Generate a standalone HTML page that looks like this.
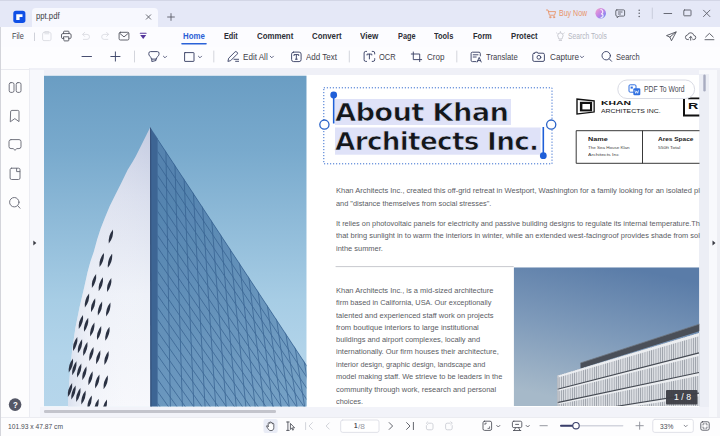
<!DOCTYPE html>
<html><head><meta charset="utf-8"><title>ppt.pdf</title>
<style>
*{box-sizing:border-box;margin:0;padding:0}
html,body{width:720px;height:436px;overflow:hidden;background:#fff}
body{font-family:"Liberation Sans",sans-serif;font-size:9px;color:#333;position:relative}
.abs{position:absolute}
.t{position:absolute;white-space:nowrap;transform-origin:0 50%}
#titlebar{left:0;top:0;width:720px;height:27px;background:#e5e8f7}
#topstrip{left:0;top:0;width:720px;height:1.3px;background:#d3d6e6}
#tab{left:32px;top:7.5px;width:126px;height:19.5px;background:#f7f8fe;border-radius:4px 4px 0 0}
#menurow{left:0;top:27px;width:720px;height:20px;background:#fcfcff}
#toolrow{left:0;top:47px;width:720px;height:20.5px;background:#fdfdff}
#toolborder{left:0;top:67.5px;width:720px;height:8px;background:#eff0f7}
#sidebar{left:0;top:67.5px;width:30px;height:349.5px;background:#fdfdfe;border-right:1px solid #ebecf2}
#sidetop{left:0;top:69px;width:30px;height:1px;background:#e9eaf0}
#leftline{left:0;top:27px;width:1px;height:409px;background:#d4d5db}
#gutterL{left:30px;top:70px;width:14px;height:347px;background:#f7f8fc}
#gutterR{left:699.3px;top:70px;width:20.7px;height:347px;background:#f8f9fc;border-right:3.5px solid #eeeff4}
#gutterR2{left:699.3px;top:74px;width:9.7px;height:343px;background:#eceef5}
#docbg{left:44px;top:75.4px;width:655.3px;height:331.2px;background:#fff}
#hscroll{left:40px;top:406.6px;width:669px;height:10.4px;background:#f2f3f9}
#hthumb{left:44px;top:410.3px;width:231.6px;height:2.5px;background:#c3c4cc;border-radius:1.2px}
#bottombar{left:0;top:416.5px;width:720px;height:19.5px;background:#fdfdfe;border-top:1px solid #ebecf1}
.sep{position:absolute;width:1px;background:#d3d5dc}
</style></head><body>
<div class="abs" id="titlebar"></div>
<div class="abs" id="topstrip"></div>
<div class="abs" id="tab"></div>
<div class="abs" id="menurow"></div>
<div class="abs" id="toolrow"></div>
<div class="abs" id="toolborder"></div>
<div class="abs" id="sidebar"></div>
<div class="abs" id="sidetop"></div>
<div class="abs" id="gutterL"></div>
<div class="abs" id="gutterR"></div>
<div class="abs" id="gutterR2"></div>
<div class="abs" id="docbg"></div>
<div class="abs" id="hscroll"></div>
<div class="abs" id="hthumb"></div>
<div class="abs" id="bottombar"></div>
<div class="abs" id="leftline"></div>
<svg class="abs" style="left:0;top:0" width="720" height="436" viewBox="0 0 720 436">
<defs>
<linearGradient id="sky1" x1="0" y1="0" x2="0" y2="1"><stop offset="0" stop-color="#6a9dc3"/><stop offset="0.23" stop-color="#79aacd"/><stop offset="0.68" stop-color="#a7cde5"/><stop offset="0.85" stop-color="#b2d4ea"/><stop offset="1" stop-color="#b6d6eb"/></linearGradient>
<linearGradient id="fac1" gradientUnits="userSpaceOnUse" x1="0" y1="127" x2="0" y2="406"><stop offset="0" stop-color="#c4cbe1"/><stop offset="0.25" stop-color="#d9deed"/><stop offset="0.6" stop-color="#eef1f8"/><stop offset="1" stop-color="#f7f8fc"/></linearGradient>
<linearGradient id="fac1s" gradientUnits="userSpaceOnUse" x1="60" y1="0" x2="150" y2="0"><stop offset="0" stop-color="#c9d3e6" stop-opacity="0.9"/><stop offset="0.35" stop-color="#e8ecf5" stop-opacity="0.3"/><stop offset="1" stop-color="#ffffff" stop-opacity="0"/></linearGradient>
<linearGradient id="gl1" gradientUnits="userSpaceOnUse" x1="158" y1="200" x2="306" y2="406"><stop offset="0" stop-color="#5584b0"/><stop offset="1" stop-color="#78a3c7"/></linearGradient>
<clipPath id="cp1"><rect x="44" y="75.4" width="262.7" height="331.1"/></clipPath>
<clipPath id="cg1"><path d="M152,130 L306.7,365 L306.7,407 L157.5,407 L157.5,138 Z"/></clipPath>
</defs>
<g clip-path="url(#cp1)">
<rect x="44" y="75.4" width="262.7" height="331.1" fill="url(#sky1)"/>
<path d="M150.5,126.7 L142.7,142.5 L135.8,156.3 L132.5,162 L127.6,170 L121.3,183 L115.5,194.5 L109.8,205.9 L105,217.5 L100.6,228.8 L97,240 L93.8,251.7 L90.3,262 L87.6,272 L84.5,286 L79.6,307 L75.4,328 L72.2,350 L70,372 L68.5,394 L68,407 L151,407 Z" fill="url(#fac1)"/>
<path d="M150.5,126.7 L142.7,142.5 L135.8,156.3 L132.5,162 L127.6,170 L121.3,183 L115.5,194.5 L109.8,205.9 L105,217.5 L100.6,228.8 L97,240 L93.8,251.7 L90.3,262 L87.6,272 L84.5,286 L79.6,307 L75.4,328 L72.2,350 L70,372 L68.5,394 L68,407 L151,407 Z" fill="url(#fac1s)"/>
<path d="M150,127 L306.7,365 L306.7,407 L157,407 L157,138 Z" fill="url(#gl1)"/>
<g clip-path="url(#cg1)" stroke="#335d8c" stroke-width="0.85" fill="none" opacity="0.8">
<line x1="165.4" y1="120" x2="170.4" y2="407"/>
<line x1="173.6" y1="120" x2="182.4" y2="407"/>
<line x1="181.6" y1="120" x2="193.9" y2="407"/>
<line x1="189.4" y1="120" x2="205.1" y2="407"/>
<line x1="196.8" y1="120" x2="215.8" y2="407"/>
<line x1="204.0" y1="120" x2="226.2" y2="407"/>
<line x1="210.9" y1="120" x2="236.2" y2="407"/>
<line x1="217.6" y1="120" x2="245.9" y2="407"/>
<line x1="224.1" y1="120" x2="255.2" y2="407"/>
<line x1="230.3" y1="120" x2="264.2" y2="407"/>
<line x1="236.3" y1="120" x2="272.9" y2="407"/>
<line x1="242.1" y1="120" x2="281.2" y2="407"/>
<line x1="247.7" y1="120" x2="289.3" y2="407"/>
<line x1="253.2" y1="120" x2="297.1" y2="407"/>
<line x1="258.4" y1="120" x2="304.7" y2="407"/>
<line x1="263.4" y1="120" x2="311.9" y2="407"/>
<line x1="268.3" y1="120" x2="318.9" y2="407"/>
<line x1="272.9" y1="120" x2="325.7" y2="407"/>
<line x1="277.5" y1="120" x2="332.2" y2="407"/>
<line x1="281.8" y1="120" x2="338.5" y2="407"/>
<line x1="286.0" y1="120" x2="344.6" y2="407"/>
<line x1="290.1" y1="120" x2="350.5" y2="407"/>
<line x1="294.0" y1="120" x2="356.2" y2="407"/>
<line x1="297.8" y1="120" x2="361.6" y2="407"/>
<line x1="301.5" y1="120" x2="366.9" y2="407"/>
<line x1="305.0" y1="120" x2="372.0" y2="407"/>
<line x1="308.4" y1="120" x2="376.9" y2="407"/>
<line x1="311.7" y1="120" x2="381.6" y2="407"/>
<line x1="314.8" y1="120" x2="386.2" y2="407"/>
<line x1="317.9" y1="120" x2="390.6" y2="407"/>
<line x1="320.9" y1="120" x2="394.9" y2="407"/>
<line x1="323.7" y1="120" x2="399.0" y2="407"/>
<line x1="326.4" y1="120" x2="403.0" y2="407"/>
<line x1="329.1" y1="120" x2="406.8" y2="407"/>
<line x1="331.7" y1="120" x2="410.5" y2="407"/>
<line x1="334.1" y1="120" x2="414.0" y2="407"/>
<line x1="336.5" y1="120" x2="417.5" y2="407"/>
<line x1="338.8" y1="120" x2="420.8" y2="407"/>
<line x1="150" y1="115.8" x2="307" y2="355.2"/>
<line x1="150" y1="127.8" x2="307" y2="366.4"/>
<line x1="150" y1="139.9" x2="307" y2="377.6"/>
<line x1="150" y1="151.9" x2="307" y2="388.7"/>
<line x1="150" y1="164.0" x2="307" y2="399.9"/>
<line x1="150" y1="176.0" x2="307" y2="411.1"/>
<line x1="150" y1="188.1" x2="307" y2="422.3"/>
<line x1="150" y1="200.1" x2="307" y2="433.4"/>
<line x1="150" y1="212.2" x2="307" y2="444.6"/>
<line x1="150" y1="224.2" x2="307" y2="455.8"/>
<line x1="150" y1="236.2" x2="307" y2="467.0"/>
<line x1="150" y1="248.3" x2="307" y2="478.2"/>
<line x1="150" y1="260.3" x2="307" y2="489.3"/>
<line x1="150" y1="272.4" x2="307" y2="500.5"/>
<line x1="150" y1="284.4" x2="307" y2="511.7"/>
<line x1="150" y1="296.5" x2="307" y2="522.9"/>
<line x1="150" y1="308.5" x2="307" y2="534.0"/>
<line x1="150" y1="320.6" x2="307" y2="545.2"/>
<line x1="150" y1="332.6" x2="307" y2="556.4"/>
<line x1="150" y1="344.6" x2="307" y2="567.6"/>
<line x1="150" y1="356.7" x2="307" y2="578.8"/>
<line x1="150" y1="368.7" x2="307" y2="589.9"/>
<line x1="150" y1="380.8" x2="307" y2="601.1"/>
<line x1="150" y1="392.8" x2="307" y2="612.3"/>
<line x1="150" y1="404.9" x2="307" y2="623.5"/>
<line x1="150" y1="416.9" x2="307" y2="634.6"/>
<line x1="150" y1="428.9" x2="307" y2="645.8"/>
<line x1="150" y1="441.0" x2="307" y2="657.0"/>
<line x1="150" y1="453.0" x2="307" y2="668.2"/>
<line x1="150" y1="465.1" x2="307" y2="679.4"/>
<line x1="150" y1="477.1" x2="307" y2="690.5"/>
<line x1="150" y1="489.2" x2="307" y2="701.7"/>
<line x1="150" y1="501.2" x2="307" y2="712.9"/>
<line x1="150" y1="513.3" x2="307" y2="724.1"/>
<line x1="150" y1="525.3" x2="307" y2="735.2"/>
<line x1="150" y1="537.3" x2="307" y2="746.4"/>
<line x1="150" y1="549.4" x2="307" y2="757.6"/>
<line x1="150" y1="561.4" x2="307" y2="768.8"/>
<line x1="150" y1="573.5" x2="307" y2="779.9"/>
<line x1="150" y1="585.5" x2="307" y2="791.1"/>
<line x1="150" y1="597.6" x2="307" y2="802.3"/>
<line x1="150" y1="609.6" x2="307" y2="813.5"/>
<line x1="150" y1="621.7" x2="307" y2="824.7"/>
<line x1="150" y1="633.7" x2="307" y2="835.8"/>
<line x1="150" y1="645.7" x2="307" y2="847.0"/>
<line x1="150" y1="657.8" x2="307" y2="858.2"/>
<line x1="150" y1="669.8" x2="307" y2="869.4"/>
<line x1="150" y1="681.9" x2="307" y2="880.5"/>
<line x1="150" y1="693.9" x2="307" y2="891.7"/>
<line x1="150" y1="706.0" x2="307" y2="902.9"/>
<line x1="150" y1="718.0" x2="307" y2="914.1"/>
<line x1="150" y1="730.1" x2="307" y2="925.3"/>
<line x1="150" y1="742.1" x2="307" y2="936.4"/>
</g>
<path d="M150,127 L157.6,138.5 L157.6,407 L150.4,407 Z" fill="#3d6594"/>
<path d="M150,127 L151.2,129 L151.6,407 L150.4,407 Z" fill="#36527c"/>
<path d="M113.0,229.5 Q113.9,237.3 108.8,243.5 Q107.9,235.7 113.0,229.5 Z" fill="#2a3142"/>
<path d="M112.1,253.8 Q113.0,261.6 107.9,267.8 Q107.0,260.0 112.1,253.8 Z" fill="#2a3142"/>
<path d="M111.3,278.1 Q112.2,285.9 107.1,292.1 Q106.2,284.3 111.3,278.1 Z" fill="#2a3142"/>
<path d="M110.4,302.4 Q111.3,310.2 106.2,316.4 Q105.3,308.6 110.4,302.4 Z" fill="#2a3142"/>
<path d="M109.5,326.7 Q110.4,334.5 105.3,340.7 Q104.4,332.9 109.5,326.7 Z" fill="#2a3142"/>
<path d="M108.6,351.0 Q109.5,358.8 104.4,365.0 Q103.5,357.2 108.6,351.0 Z" fill="#2a3142"/>
<path d="M107.8,375.3 Q108.7,383.1 103.6,389.3 Q102.7,381.5 107.8,375.3 Z" fill="#2a3142"/>
<path d="M106.9,399.6 Q107.8,407.4 102.7,413.6 Q101.8,405.8 106.9,399.6 Z" fill="#2a3142"/>
<path d="M103.8,253.0 Q104.7,260.8 99.6,267.0 Q98.7,259.2 103.8,253.0 Z" fill="#2a3142"/>
<path d="M102.9,277.3 Q103.8,285.1 98.7,291.3 Q97.8,283.5 102.9,277.3 Z" fill="#2a3142"/>
<path d="M102.1,301.6 Q103.0,309.4 97.9,315.6 Q97.0,307.8 102.1,301.6 Z" fill="#2a3142"/>
<path d="M101.2,325.9 Q102.1,333.7 97.0,339.9 Q96.1,332.1 101.2,325.9 Z" fill="#2a3142"/>
<path d="M100.3,350.2 Q101.2,358.0 96.1,364.2 Q95.2,356.4 100.3,350.2 Z" fill="#2a3142"/>
<path d="M99.4,374.5 Q100.3,382.3 95.2,388.5 Q94.3,380.7 99.4,374.5 Z" fill="#2a3142"/>
<path d="M98.6,398.8 Q99.5,406.6 94.4,412.8 Q93.5,405.0 98.6,398.8 Z" fill="#2a3142"/>
<path d="M96.1,274.0 Q97.0,281.8 91.9,288.0 Q91.0,280.2 96.1,274.0 Z" fill="#2a3142"/>
<path d="M95.2,298.3 Q96.1,306.1 91.0,312.3 Q90.1,304.5 95.2,298.3 Z" fill="#2a3142"/>
<path d="M94.4,322.6 Q95.3,330.4 90.2,336.6 Q89.3,328.8 94.4,322.6 Z" fill="#2a3142"/>
<path d="M93.5,346.9 Q94.4,354.7 89.3,360.9 Q88.4,353.1 93.5,346.9 Z" fill="#2a3142"/>
<path d="M92.6,371.2 Q93.5,379.0 88.4,385.2 Q87.5,377.4 92.6,371.2 Z" fill="#2a3142"/>
<path d="M91.7,395.5 Q92.6,403.3 87.5,409.5 Q86.6,401.7 91.7,395.5 Z" fill="#2a3142"/>
<path d="M89.1,293.4 Q90.0,301.2 84.9,307.4 Q84.0,299.6 89.1,293.4 Z" fill="#2a3142"/>
<path d="M88.2,317.7 Q89.1,325.5 84.0,331.7 Q83.1,323.9 88.2,317.7 Z" fill="#2a3142"/>
<path d="M87.4,342.0 Q88.3,349.8 83.2,356.0 Q82.3,348.2 87.4,342.0 Z" fill="#2a3142"/>
<path d="M86.5,366.3 Q87.4,374.1 82.3,380.3 Q81.4,372.5 86.5,366.3 Z" fill="#2a3142"/>
<path d="M85.6,390.6 Q86.5,398.4 81.4,404.6 Q80.5,396.8 85.6,390.6 Z" fill="#2a3142"/>
<path d="M83.0,315.0 Q83.9,322.8 78.8,329.0 Q77.9,321.2 83.0,315.0 Z" fill="#2a3142"/>
<path d="M82.1,339.3 Q83.0,347.1 77.9,353.3 Q77.0,345.5 82.1,339.3 Z" fill="#2a3142"/>
<path d="M81.3,363.6 Q82.2,371.4 77.1,377.6 Q76.2,369.8 81.3,363.6 Z" fill="#2a3142"/>
<path d="M80.4,387.9 Q81.3,395.7 76.2,401.9 Q75.3,394.1 80.4,387.9 Z" fill="#2a3142"/>
<path d="M77.3,337.0 Q78.2,344.8 73.1,351.0 Q72.2,343.2 77.3,337.0 Z" fill="#2a3142"/>
<path d="M76.4,361.3 Q77.3,369.1 72.2,375.3 Q71.3,367.5 76.4,361.3 Z" fill="#2a3142"/>
<path d="M75.6,385.6 Q76.5,393.4 71.4,399.6 Q70.5,391.8 75.6,385.6 Z" fill="#2a3142"/>
<path d="M73.0,358.6 Q73.9,366.4 68.8,372.6 Q67.9,364.8 73.0,358.6 Z" fill="#2a3142"/>
<path d="M72.1,382.9 Q73.0,390.7 67.9,396.9 Q67.0,389.1 72.1,382.9 Z" fill="#2a3142"/>
</g></svg>
<svg class="abs" style="left:0;top:0" width="720" height="436" viewBox="0 0 720 436">
<defs>
<linearGradient id="sky2" gradientUnits="userSpaceOnUse" x1="625" y1="267" x2="595" y2="406"><stop offset="0" stop-color="#5a7ca8"/><stop offset="0.5" stop-color="#7e9aba"/><stop offset="1" stop-color="#a6b9c9"/></linearGradient>
<clipPath id="cp2"><rect x="513.7" y="267.3" width="185.6" height="138.7"/></clipPath>
<clipPath id="cf2"><path d="M557.4,375.7 L700,332.7 L700,407 L557.4,407 Z"/></clipPath>
<pattern id="str2" width="2.2" height="10" patternUnits="userSpaceOnUse"><rect width="2.2" height="10" fill="#d9dce1"/><rect width="0.75" height="10" fill="#8d939c"/></pattern>
</defs>
<g clip-path="url(#cp2)">
<rect x="513.7" y="267.3" width="185.5999999999999" height="138.7" fill="url(#sky2)"/>
<path d="M580.5,363 L700,323.9 L700,331 L580.5,368.6 Z" fill="#4a4f58"/>
<path d="M580.5,363 L700,323.9" stroke="#6d737c" stroke-width="0.8"/>
<path d="M557.4,375.7 L700,332.7 L700,407 L557.4,407 Z" fill="#e4e6ea"/>
<g clip-path="url(#cf2)">
<rect x="557" y="325" width="143" height="85" fill="url(#str2)" opacity="0.85"/>
<path d="M557.4,375.7 L699.0,333.0 L699.0,336.2 L557.4,377.7 Z" fill="#eceef1"/>
<path d="M557.4,389.3 L699.0,352.9 L699.0,356.1 L557.4,391.3 Z" fill="#eceef1"/>
<path d="M557.4,389.3 L699.0,352.9" stroke="#454a53" stroke-width="1.1"/>
<path d="M557.4,402.6 L699.0,372.5 L699.0,375.7 L557.4,404.6 Z" fill="#eceef1"/>
<path d="M557.4,402.6 L699.0,372.5" stroke="#454a53" stroke-width="1.1"/>
<path d="M557.4,415.9 L699.0,393.1 L699.0,396.3 L557.4,417.9 Z" fill="#eceef1"/>
<path d="M557.4,415.9 L699.0,393.1" stroke="#454a53" stroke-width="1.1"/>
<path d="M557.4,429.0 L699.0,413.0 L699.0,416.2 L557.4,431.0 Z" fill="#eceef1"/>
<path d="M557.4,429.0 L699.0,413.0" stroke="#454a53" stroke-width="1.1"/>
<path d="M557.9,375.5 L557.9,407" stroke="#9a9fa8" stroke-width="1"/>
</g>
</g>
<rect x="666" y="390" width="31.4" height="14.4" rx="1" fill="#3d3e46" opacity="0.96"/>
</svg>
<svg class="abs" style="left:0;top:0" width="720" height="436" viewBox="0 0 720 436">
<!-- heading highlight -->
<rect x="335" y="99" width="176" height="26" fill="#dfe2f8"/>
<rect x="335" y="127.5" width="205.7" height="27.2" fill="#dfe2f8"/>
<!-- dotted selection -->
<rect x="323.8" y="87.8" width="228.2" height="76" fill="none" stroke="#3a6fd0" stroke-width="1" stroke-dasharray="1.2 1.8"/>
<!-- handles -->
<line x1="333.7" y1="95" x2="333.7" y2="123.5" stroke="#1f5fd8" stroke-width="1.6"/>
<circle cx="333.7" cy="95" r="3.4" fill="#1f5fd8"/>
<line x1="543.3" y1="127" x2="543.3" y2="155.5" stroke="#1f5fd8" stroke-width="1.6"/>
<circle cx="543.3" cy="155.7" r="3.4" fill="#1f5fd8"/>
<circle cx="324.4" cy="124.6" r="4.6" fill="#fff" stroke="#2a63c8" stroke-width="1.3"/>
<circle cx="551.2" cy="124.6" r="4.6" fill="#fff" stroke="#2a63c8" stroke-width="1.3"/>
<!-- rule -->
<line x1="335.6" y1="266.6" x2="513.7" y2="266.6" stroke="#c2c3c8" stroke-width="0.9"/>
<!-- khan logo -->
<path d="M576.3,98.3 L594.8,100.3 L594.8,112.6 L576.3,114.8 Z" fill="#111"/>
<path d="M577.7,99.9 L593.5,101.5 L593.5,111.5 L577.7,113.2 Z" fill="#fff"/>
<rect x="579.9" y="101.8" width="12.2" height="9.6" fill="#111"/>
<rect x="582.4" y="104" width="7.6" height="5.4" fill="#fff"/>
<!-- second logo partial -->
<path d="M688,97.4 L699.3,97.4 L699.3,99.2 L688,99.2 Z M683,99 L685,99 L685,114.6 L699.3,114.6 L699.3,116.5 L683,116.5 Z" fill="#111"/>
<!-- table -->
<path d="M699.5,130.7 L576.2,130.7 L576.2,163.3 L699.5,163.3 M642.5,130.7 L642.5,163.3" fill="none" stroke="#222" stroke-width="0.9"/>
<!-- pdf to word button -->
<rect x="617.8" y="80" width="76.8" height="18.5" rx="9.2" fill="#fff" stroke="#d9dbe4" stroke-width="1"/>
<rect x="629" y="84.8" width="7" height="7.4" rx="1.2" fill="#fff" stroke="#2f6fe0" stroke-width="1"/>
<rect x="630.6" y="86.6" width="2.2" height="2" fill="#2f6fe0"/>
<rect x="633.3" y="88.2" width="7" height="7" rx="1.3" fill="#2f6fe0"/>
<path d="M634.8,90.3 l0.9,3 l1,-2.4 l1,2.4 l0.9,-3" fill="none" stroke="#fff" stroke-width="0.7"/>
<!-- v scrollbar thumb -->
<rect x="703.3" y="74.5" width="2.4" height="17" rx="1.2" fill="#a8acc0"/>
<!-- gutter arrows -->
<path d="M33.3,240.6 l3,2.4 l-3,2.4 z" fill="#3a3c44"/>
<path d="M712.5,240.6 l3,2.4 l-3,2.4 z" fill="#3a3c44"/>
</svg>

<svg class="abs" style="left:0;top:0" width="720" height="436" viewBox="0 0 720 436" fill="none" stroke-linecap="round" stroke-linejoin="round">
<defs>
<linearGradient id="av" x1="0" y1="0" x2="1" y2="1"><stop offset="0" stop-color="#f7a6c8"/><stop offset="0.5" stop-color="#c183e8"/><stop offset="1" stop-color="#5f8cf2"/></linearGradient>
</defs>
<!-- TITLE BAR -->
<rect x="13.3" y="10.8" width="12.1" height="12.1" rx="2.7" fill="#0f4fe6"/>
<path d="M16.25,14.2 H22.5 V17 H19.6 V20 H16.25 Z" fill="#fff"/>
<path d="M146.3,14.8 l4.4,4.4 M150.7,14.8 l-4.4,4.4" stroke="#5a5c66" stroke-width="0.9"/>
<path d="M167.6,17 h6.8 M171,13.6 v6.8" stroke="#5a5c66" stroke-width="0.9"/>
<g stroke="#e8946a" stroke-width="0.9">
<path d="M546.4,10 h1.6 l1.4,5.2 h5.2 l1,-3.6 h-7.2"/>
<circle cx="550.2" cy="17.2" r="0.7"/><circle cx="554" cy="17.2" r="0.7"/>
</g>
<circle cx="600.7" cy="13.2" r="5.3" fill="url(#av)"/>
<path d="M600.9,9.5 c2.2,0.6 2.6,3.4 0.6,4.4 c2.4,0.8 2,3.4 -0.4,3.6" stroke="#fff" stroke-width="1.2" opacity="0.85"/>
<g stroke="#5a5c66" stroke-width="0.9">
<path d="M616.8,9.9 h6.8 a1,1 0 0 1 1,1 v4.2 a1,1 0 0 1 -1,1 h-4.6 l-1.8,1.6 v-1.6 h-0.4 a1,1 0 0 1 -1,-1 v-4.2 a1,1 0 0 1 1,-1 z"/>
<path d="M618.3,12 h3.8 M618.3,14 h2.2"/>
<path d="M664,13.5 h7.7"/>
<rect x="683.8" y="10" width="7.2" height="5.8" rx="0.6"/>
<path d="M703.5,10.2 l6.4,6.4 M709.9,10.2 l-6.4,6.4"/>
</g>
<g fill="#5a5c66"><circle cx="639.2" cy="10.2" r="0.75"/><circle cx="639.2" cy="13.3" r="0.75"/><circle cx="639.2" cy="16.4" r="0.75"/></g>
<path d="M652.3,8 v10.5" stroke="#c9ccdb" stroke-width="1"/>

<!-- MENU ROW -->
<rect x="181.2" y="43" width="25.6" height="1.6" rx="0.8" fill="#2a62d8"/>
<path d="M34.5,33 v7.6" stroke="#cfd1d9" stroke-width="1"/>
<g stroke="#dadbe2" stroke-width="0.9">
<rect x="42.6" y="32.4" width="8.4" height="8.2" rx="1.4"/>
<path d="M44.8,32.4 v-0.9 h4 v0.9 M44.8,33.8 h4"/>
<path d="M84.6,32.4 l-2,2 l2,2 M82.8,34.4 h4.2 a2.5,2.5 0 0 1 0,5 h-3.6"/>
<path d="M106.6,32.4 l2,2 l-2,2 M108.4,34.4 h-4.2 a2.5,2.5 0 0 0 0,5 h3.6"/>
</g>
<g stroke="#50525c" stroke-width="0.9">
<path d="M63.6,33.6 v-1.6 a0.8,0.8 0 0 1 0.8,-0.8 h3.8 a0.8,0.8 0 0 1 0.8,0.8 v1.6"/>
<path d="M63.8,38.6 h-0.9 a1.4,1.4 0 0 1 -1.4,-1.4 v-2.2 a1.4,1.4 0 0 1 1.4,-1.4 h6.8 a1.4,1.4 0 0 1 1.4,1.4 v2.2 a1.4,1.4 0 0 1 -1.4,1.4 h-0.9"/>
<path d="M63.8,36.8 h5 v3.4 a0.7,0.7 0 0 1 -0.7,0.7 h-3.6 a0.7,0.7 0 0 1 -0.7,-0.7 z"/>
<rect x="119.1" y="32.3" width="9.8" height="7.7" rx="1.3"/>
<path d="M119.6,33.2 l4.4,3.7 l4.4,-3.7"/>
</g>
<path d="M140.3,33.3 h5.8" stroke="#55379c" stroke-width="1.1"/>
<path d="M140.2,35 h6 l-3,3.9 z" fill="#55379c"/>
<g stroke="#bcbec6" stroke-width="0.8">
<path d="M558.9,38.6 c0,-0.9 -1.2,-1.5 -1.2,-3 a2.7,2.7 0 0 1 5.4,0 c0,1.5 -1.2,2.1 -1.2,3 z M559.2,40.4 h2.4"/>
<path d="M560.4,31.6 v0.7 M556.6,33 l0.5,0.4 M564.2,33 l-0.5,0.4"/>
</g>
<g stroke="#50525c" stroke-width="0.9">
<path d="M675.9,32 l-9.4,3.6 l3.4,1.5 l1.4,3.3 z M669.9,37.1 l6,-5.1"/>
<path d="M688.4,39.6 h-0.5 a2.3,2.3 0 0 1 -0.3,-4.6 a3.2,3.2 0 0 1 6.2,0.4 a2.1,2.1 0 0 1 -0.3,4.2 h-0.6 M690.7,40.2 v-3.6 M689.2,38 l1.5,-1.5 l1.5,1.5"/>
<path d="M705.6,37 l3.8,-3.6 l3.8,3.6 M705,39.7 h8.9"/>
</g>

<!-- TOOLBAR -->
<g stroke="#3d4468" stroke-width="0.95">
<path d="M82,56.5 h9.5"/>
<path d="M110.8,56.5 h9.2 M115.4,51.9 v9.2"/>
<!-- highlighter -->
<path d="M148.8,53.2 a1.6,1.6 0 0 1 1.6,-1.6 h7 a1.6,1.6 0 0 1 1.6,1.6 v1 c0,1.5 -1.4,2 -2,3.2 l-0.7,1.7 h-4.8 l-0.7,-1.7 c-0.6,-1.2 -2,-1.7 -2,-3.2 z M151.8,59.1 v2.4 l4.2,-1 v-1.4"/>
<path d="M163.4,56.2 l1.6,1.6 l1.6,-1.6" stroke-width="0.8"/>
<rect x="184.6" y="52.6" width="9.4" height="8.8" rx="0.4"/>
<path d="M198.4,56.2 l1.6,1.6 l1.6,-1.6" stroke-width="0.8"/>
<!-- pen -->
<path d="M228,61 l0.7,-2.8 l6.2,-6.2 a1.3,1.3 0 0 1 1.9,0 l0.3,0.3 a1.3,1.3 0 0 1 0,1.9 l-6.2,6.2 z M234,59.3 h4.6 M235.6,61.3 h3"/>
<path d="M270.2,56.2 l1.6,1.6 l1.6,-1.6" stroke-width="0.8"/>
<!-- T box -->
<rect x="291.6" y="52.1" width="9.5" height="9.5" rx="2"/>
<path d="M294,55.6 v-1 h4.7 v1 M296.35,54.6 v4.6 M295.4,59.2 h1.9"/>
<!-- OCR -->
<path d="M366.6,51.4 h-0.9 a1.6,1.6 0 0 0 -1.6,1.6 v6.8 a1.6,1.6 0 0 0 1.6,1.6 h0.9 M372.2,51.4 h0.9 a1.6,1.6 0 0 1 1.6,1.6 v1 M374.7,58.6 v1.2 a1.6,1.6 0 0 1 -1.6,1.6 h-0.9"/>
<path d="M367,55 v-0.9 h4.8 v0.9 M369.4,54.1 v4.8"/>
<!-- crop -->
<path d="M413.3,52 v7.6 h8.4 M411.3,54 h8.4 v7.6"/>
<!-- translate -->
<path d="M476,61.6 h-3.6 a1.3,1.3 0 0 1 -1.3,-1.3 v-6.8 a1.3,1.3 0 0 1 1.3,-1.3 h6.6 a1.3,1.3 0 0 1 1.3,1.3 v2.4"/>
<path d="M473.2,54.8 h4.8 M473.2,57 h3 M477.2,62 l2,-4.6 l2,4.6 M477.9,60.6 h2.6"/>
<!-- capture -->
<path d="M534.2,53.2 h0.8 l0.5,-1 h1.8 l0.5,1 h5.2 a1.4,1.4 0 0 1 1.4,1.4 v5.4 a1.4,1.4 0 0 1 -1.4,1.4 h-8.8 a1.4,1.4 0 0 1 -1.4,-1.4 v-5.4 a1.4,1.4 0 0 1 1.4,-1.4 z"/>
<circle cx="538.9" cy="57.3" r="1.9"/>
<path d="M580.4,56.2 l1.6,1.6 l1.6,-1.6" stroke-width="0.8"/>
<!-- search -->
<circle cx="606.2" cy="55.7" r="4.2"/><path d="M609.3,58.9 l2.3,2.4"/>
</g>
<g stroke="#d3d5dc" stroke-width="1">
<path d="M134.5,51 v11 M213.8,51 v11 M349.3,51 v11 M456.8,51 v11"/>
</g>

<!-- SIDEBAR -->
<g stroke="#6c6e79" stroke-width="0.95">
<rect x="9.2" y="82.6" width="4.8" height="9.8" rx="1.7"/><rect x="16.2" y="82.6" width="4.8" height="9.8" rx="1.7"/>
<path d="M10.6,111.6 a1.2,1.2 0 0 1 1.2,-1.2 h6 a1.2,1.2 0 0 1 1.2,1.2 v10 l-4.2,-3 l-4.2,3 z"/>
<path d="M11,139.6 h8 a2,2 0 0 1 2,2 v5 a2,2 0 0 1 -2,2 h-2.4 l-1.6,1.8 l-1.6,-1.8 h-2.4 a2,2 0 0 1 -2,-2 v-5 a2,2 0 0 1 2,-2 z"/>
<path d="M11.6,168.2 h6.9 a1.5,1.5 0 0 1 1.5,1.5 v8.3 a1.5,1.5 0 0 1 -1.5,1.5 h-6.9 a1.5,1.5 0 0 1 -1.5,-1.5 v-8.3 a1.5,1.5 0 0 1 1.5,-1.5 z M16.6,168.4 v3.2 h3.2"/>
<circle cx="14.3" cy="202.2" r="4.7"/><path d="M17.8,205.8 l2.2,2.4"/>
</g>
<circle cx="15.1" cy="404.6" r="6.3" fill="#545766"/>

<!-- BOTTOM BAR -->
<rect x="263.5" y="419" width="14.2" height="14" rx="2" fill="#e9ecf6"/>
<g stroke="#484a54" stroke-width="0.85">
<path d="M268.2,426.6 v-3.2 a0.7,0.7 0 0 1 1.4,0 v-0.8 a0.7,0.7 0 0 1 1.4,0 v0.6 a0.7,0.7 0 0 1 1.4,0 v0.9 a0.7,0.7 0 0 1 1.4,0 v3.6 c0,1.8 -1,2.9 -2.8,2.9 c-1.6,0 -2.2,-0.6 -3,-1.9 l-1.4,-2.2 c-0.4,-0.8 0.6,-1.3 1.1,-0.6 z" fill="#fff"/>
<path d="M286.6,422 h2.6 M287.9,422 v8.4 M286.6,430.4 h2.6 M290.4,423.8 v5.6 l1.3,-1.2 l1,2 l0.8,-0.4 l-1,-2 h1.7 z"/>
<path d="M389.2,422.6 l3.4,3.4 l-3.4,3.4"/>
<path d="M406.6,422.6 l3.4,3.4 l-3.4,3.4 M413.4,422.4 v7.2"/>
<rect x="483" y="421.2" width="8.6" height="9.2" rx="1.6"/>
<path d="M485,424.6 v-1.4 h1.4 M488,428.4 h1.6 v-1.6" stroke-width="0.75"/>
<path d="M496.7,425.4 l1.6,1.6 l1.6,-1.6" stroke-width="0.8"/>
<path d="M513.8,421.2 h6.6 a1.4,1.4 0 0 1 1.4,1.4 v3.6 a1.4,1.4 0 0 1 -1.4,1.4 h-6.6 a1.4,1.4 0 0 1 -1.4,-1.4 v-3.6 a1.4,1.4 0 0 1 1.4,-1.4 z M515.6,424.4 h3 M514.2,430.4 l1.4,-2.6 M520,430.4 l-1.4,-2.6 M513.4,430.5 h7.4"/>
<path d="M526.1,425.4 l1.6,1.6 l1.6,-1.6" stroke-width="0.8"/>
<rect x="700.8" y="421.8" width="8.4" height="8.4" rx="1.6"/>
<path d="M703,425 v-1.2 h1.2 M707,425 v-1.2 h-1.2 M703,427 v1.2 h1.2 M707,427 v1.2 h-1.2" stroke-width="0.7"/>
<path d="M684.1,425.2 l1.6,1.6 l1.6,-1.6" stroke-width="0.8"/>
</g>
<g stroke="#cdcfd6" stroke-width="0.9">
<path d="M305.6,422.6 v7 M312.4,422.6 l-3.4,3.4 l3.4,3.4"/>
<path d="M329.2,422.9 l-3.1,3.1 l3.1,3.1"/>
<path d="M428.4,423.2 h3 a1.6,1.6 0 0 1 1.6,1.6 v3.4 a1.6,1.6 0 0 1 -1.6,1.6 h-3.4 a1.6,1.6 0 0 1 -1.6,-1.6 v-2.6 M427.8,421.8 l-1.5,1.4 l1.5,1.4"/>
<path d="M450.2,423.2 h-3 a1.6,1.6 0 0 0 -1.6,1.6 v3.4 a1.6,1.6 0 0 0 1.6,1.6 h3.4 a1.6,1.6 0 0 0 1.6,-1.6 v-2.6 M450.8,421.8 l1.5,1.4 l-1.5,1.4"/>
</g>
<rect x="340.7" y="420" width="38.3" height="12.4" rx="2" fill="#fff" stroke="#dcdee5" stroke-width="0.9"/>
<rect x="652.8" y="419.4" width="40.5" height="13" rx="2" fill="#fff" stroke="#dcdee5" stroke-width="0.9"/>
<path d="M684.1,425.2 l1.6,1.6 l1.6,-1.6" stroke="#6a6c76" stroke-width="0.8"/>
<path d="M540,425.7 h7.3 M636,425.7 h7.3 M639.65,422.1 v7.2" stroke="#8a8c96" stroke-width="0.9"/>
<path d="M561,425.7 h61.7" stroke="#d3d5de" stroke-width="1.4"/>
<path d="M561,425.7 h13.5" stroke="#3a3f6b" stroke-width="2"/>
<circle cx="576" cy="425.7" r="3.2" fill="#fff" stroke="#3a3f6b" stroke-width="1.1"/>
</svg>

<div class="t" style="left:36px;top:11.70px;font-size:8.5px;line-height:8.5px;font-weight:normal;color:#3a3c44;transform:scaleX(0.9077);">ppt.pdf</div>
<div class="t" style="left:558.5px;top:9.00px;font-size:8.5px;line-height:8.5px;font-weight:normal;color:#e8946a;transform:scaleX(0.8290);">Buy Now</div>
<div class="t" style="left:11.7px;top:32.00px;font-size:8.5px;line-height:8.5px;font-weight:normal;color:#44464e;transform:scaleX(0.8611);">File</div>
<div class="t" style="left:182.5px;top:32.00px;font-size:8.5px;line-height:8.5px;font-weight:bold;color:#2a5fd6;transform:scaleX(0.9228);">Home</div>
<div class="t" style="left:223.7px;top:32.00px;font-size:8.5px;line-height:8.5px;font-weight:bold;color:#2c2e36;transform:scaleX(0.8591);">Edit</div>
<div class="t" style="left:256.5px;top:32.00px;font-size:8.5px;line-height:8.5px;font-weight:bold;color:#2c2e36;transform:scaleX(0.9259);">Comment</div>
<div class="t" style="left:311.7px;top:32.00px;font-size:8.5px;line-height:8.5px;font-weight:bold;color:#2c2e36;transform:scaleX(0.9214);">Convert</div>
<div class="t" style="left:360px;top:32.00px;font-size:8.5px;line-height:8.5px;font-weight:bold;color:#2c2e36;transform:scaleX(0.9522);">View</div>
<div class="t" style="left:397.5px;top:32.00px;font-size:8.5px;line-height:8.5px;font-weight:bold;color:#2c2e36;transform:scaleX(0.8609);">Page</div>
<div class="t" style="left:434px;top:32.00px;font-size:8.5px;line-height:8.5px;font-weight:bold;color:#2c2e36;transform:scaleX(0.8754);">Tools</div>
<div class="t" style="left:472.5px;top:32.00px;font-size:8.5px;line-height:8.5px;font-weight:bold;color:#2c2e36;transform:scaleX(0.8847);">Form</div>
<div class="t" style="left:510.5px;top:32.00px;font-size:8.5px;line-height:8.5px;font-weight:bold;color:#2c2e36;transform:scaleX(0.9045);">Protect</div>
<div class="t" style="left:567.7px;top:32.00px;font-size:8.5px;line-height:8.5px;font-weight:normal;color:#b4b6bf;transform:scaleX(0.7921);">Search Tools</div>
<div class="t" style="left:243.3px;top:53.35px;font-size:8.8px;line-height:8.8px;font-weight:normal;color:#3f414a;transform:scaleX(0.9180);">Edit All</div>
<div class="t" style="left:305.8px;top:53.35px;font-size:8.8px;line-height:8.8px;font-weight:normal;color:#3f414a;transform:scaleX(0.9097);">Add Text</div>
<div class="t" style="left:378.8px;top:53.35px;font-size:8.8px;line-height:8.8px;font-weight:normal;color:#3f414a;transform:scaleX(0.8537);">OCR</div>
<div class="t" style="left:426.8px;top:53.35px;font-size:8.8px;line-height:8.8px;font-weight:normal;color:#3f414a;transform:scaleX(0.9173);">Crop</div>
<div class="t" style="left:485.8px;top:53.35px;font-size:8.8px;line-height:8.8px;font-weight:normal;color:#3f414a;transform:scaleX(0.8722);">Translate</div>
<div class="t" style="left:549.8px;top:53.35px;font-size:8.8px;line-height:8.8px;font-weight:normal;color:#3f414a;transform:scaleX(0.9266);">Capture</div>
<div class="t" style="left:615.8px;top:53.35px;font-size:8.8px;line-height:8.8px;font-weight:normal;color:#3f414a;transform:scaleX(0.8502);">Search</div>
<div class="t" style="left:7.6px;top:423.48px;font-size:7.7px;line-height:7.7px;font-weight:normal;color:#4a4c54;transform:scaleX(0.8696);">101.93 x 47.87 cm</div>
<div class="t" style="left:353.5px;top:422.23px;font-size:8px;line-height:8px;font-weight:bold;color:#4a4c54;transform:scaleX(0.7860);">1</div>
<div class="t" style="left:358px;top:423.50px;font-size:6.5px;line-height:6.5px;font-weight:normal;color:#9a9ca4;transform:scaleX(1.2911);">/8</div>
<div class="t" style="left:660px;top:423.23px;font-size:8px;line-height:8px;font-weight:normal;color:#4a4c54;transform:scaleX(0.8304);">33%</div>
<div class="t" style="left:673.5px;top:393.38px;font-size:9px;line-height:9px;font-weight:normal;color:#ffffff;transform:scaleX(0.9706);">1 / 8</div>
<div class="t" style="left:12.7px;top:399.96px;font-size:9.5px;line-height:9.5px;font-weight:bold;color:#ffffff;transform:scaleX(0.8258);">?</div>
<div class="t" style="left:644.4px;top:85.10px;font-size:8.5px;line-height:8.5px;font-weight:normal;color:#4a4c55;transform:scaleX(0.8007);">PDF To Word</div>
<div class="t" style="left:600.6px;top:101.06px;font-size:5.6px;line-height:5.6px;font-weight:bold;color:#111;transform:scaleX(1.8551);">KHAN</div>
<div class="t" style="left:600.6px;top:108.15px;font-size:6.2px;line-height:6.2px;font-weight:normal;color:#222;transform:scaleX(1.1111);">ARCHITECTS INC.</div>
<div class="t" style="left:688.4px;top:102.38px;font-size:9px;line-height:9px;font-weight:bold;color:#111;transform:scaleX(1.5846);">R</div>
<div class="t" style="left:588px;top:137.06px;font-size:5.6px;line-height:5.6px;font-weight:bold;color:#222;transform:scaleX(1.2918);">Name</div>
<div class="t" style="left:658px;top:137.06px;font-size:5.6px;line-height:5.6px;font-weight:bold;color:#222;transform:scaleX(1.1613);">Ares Space</div>
<div class="t" style="left:588px;top:146.44px;font-size:4.2px;line-height:4.2px;font-weight:normal;color:#444;transform:scaleX(1.0736);">The Sea House Klan</div>
<div class="t" style="left:588px;top:152.64px;font-size:4.2px;line-height:4.2px;font-weight:normal;color:#444;transform:scaleX(1.2331);">Architects Inc</div>
<div class="t" style="left:658px;top:146.44px;font-size:4.2px;line-height:4.2px;font-weight:normal;color:#444;transform:scaleX(1.1584);">550ft Total</div>
<div class="t" style="left:334.6px;top:101.10px;font-size:24.7px;line-height:24.7px;font-weight:bold;color:#15161a;font-family:&quot;DejaVu Sans&quot;,&quot;Liberation Sans&quot;,sans-serif;-webkit-text-stroke:0.7px #dfe2f8;letter-spacing:-0.7px;transform:scaleX(1.1127);">About Khan</div>
<div class="t" style="left:334.6px;top:129.70px;font-size:24.7px;line-height:24.7px;font-weight:bold;color:#15161a;font-family:&quot;DejaVu Sans&quot;,&quot;Liberation Sans&quot;,sans-serif;-webkit-text-stroke:0.7px #dfe2f8;letter-spacing:-0.7px;transform:scaleX(1.0672);">Architects Inc.</div>
<div class="t" style="left:335.6px;top:186.74px;font-size:7.4px;line-height:7.4px;font-weight:normal;color:#5a5c64;transform:scaleX(1.0163);">Khan Architects Inc., created this off-grid retreat in Westport, Washington for a family looking for an isolated pl</div>
<div class="t" style="left:335.6px;top:199.74px;font-size:7.4px;line-height:7.4px;font-weight:normal;color:#5a5c64;transform:scaleX(0.9962);">and "distance themselves from social stresses".</div>
<div class="t" style="left:335.6px;top:220.04px;font-size:7.4px;line-height:7.4px;font-weight:normal;color:#5a5c64;transform:scaleX(0.9975);">It relies on photovoltaic panels for electricity and passive building designs to regulate its internal temperature.Th</div>
<div class="t" style="left:335.6px;top:232.34px;font-size:7.4px;line-height:7.4px;font-weight:normal;color:#5a5c64;transform:scaleX(1.0089);">that bring sunlight in to warm the interiors in winter, while an extended west-facingroof provides shade from sol</div>
<div class="t" style="left:335.6px;top:244.54px;font-size:7.4px;line-height:7.4px;font-weight:normal;color:#5a5c64;transform:scaleX(1.0103);">inthe summer.</div>
<div class="t" style="left:335.6px;top:286.84px;font-size:7.4px;line-height:7.4px;font-weight:normal;color:#5a5c64;transform:scaleX(1.0136);">Khan Architects Inc., is a mid-sized architecture</div>
<div class="t" style="left:335.6px;top:299.38px;font-size:7.4px;line-height:7.4px;font-weight:normal;color:#5a5c64;transform:scaleX(0.9956);">firm based in California, USA. Our exceptionally</div>
<div class="t" style="left:335.6px;top:312.18px;font-size:7.4px;line-height:7.4px;font-weight:normal;color:#5a5c64;transform:scaleX(1.0183);">talented and experienced staff work on projects</div>
<div class="t" style="left:335.6px;top:323.77px;font-size:7.4px;line-height:7.4px;font-weight:normal;color:#5a5c64;transform:scaleX(1.0254);">from boutique interiors to large institutional</div>
<div class="t" style="left:335.6px;top:336.10px;font-size:7.4px;line-height:7.4px;font-weight:normal;color:#5a5c64;transform:scaleX(1.0079);">buildings and airport complexes, locally and</div>
<div class="t" style="left:335.6px;top:348.34px;font-size:7.4px;line-height:7.4px;font-weight:normal;color:#5a5c64;transform:scaleX(1.0119);">internationally. Our firm houses their architecture,</div>
<div class="t" style="left:335.6px;top:360.70px;font-size:7.4px;line-height:7.4px;font-weight:normal;color:#5a5c64;transform:scaleX(0.9901);">interior design, graphic design, landscape and</div>
<div class="t" style="left:335.6px;top:373.01px;font-size:7.4px;line-height:7.4px;font-weight:normal;color:#5a5c64;transform:scaleX(1.0036);">model making staff. We strieve to be leaders in the</div>
<div class="t" style="left:335.6px;top:386.06px;font-size:7.4px;line-height:7.4px;font-weight:normal;color:#5a5c64;transform:scaleX(1.0129);">community through work, research and personal</div>
<div class="t" style="left:335.6px;top:397.63px;font-size:7.4px;line-height:7.4px;font-weight:normal;color:#5a5c64;transform:scaleX(0.9954);">choices.</div>
</body></html>
